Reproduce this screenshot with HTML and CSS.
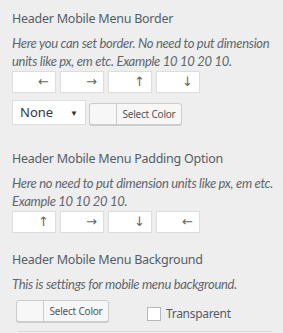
FILE: index.html
```html
<!DOCTYPE html>
<html lang="en">
<head>
    <meta charset="UTF-8">
    <meta name="viewport" content="width=device-width, initial-scale=1.0">
    <title>Header Mobile Menu</title>
    <link rel="stylesheet" href="styles.css">
</head>
<body>
    <div class="control">
        <h3 class="control-title">Header Mobile Menu Border</h3>
        <p class="control-desc">Here you can set border. No need to put dimension units like px, em etc. Example 10 10 20 10.</p>
        <div class="dimensions">
            <div class="dim">&larr;</div>
            <div class="dim">&rarr;</div>
            <div class="dim">&uarr;</div>
            <div class="dim">&darr;</div>
        </div>
        <div class="border-row">
            <div class="select">None<span class="caret">&#9660;</span></div>
            <div class="color-btn">
                <span class="swatch"></span>
                <span class="color-label">Select Color</span>
            </div>
        </div>
    </div>

    <div class="control padding-control">
        <h3 class="control-title">Header Mobile Menu Padding Option</h3>
        <p class="control-desc">Here no need to put dimension units like px, em etc. Example 10 10 20 10.</p>
        <div class="dimensions">
            <div class="dim">&uarr;</div>
            <div class="dim">&rarr;</div>
            <div class="dim">&darr;</div>
            <div class="dim">&larr;</div>
        </div>
    </div>

    <div class="control bg-control">
        <h3 class="control-title">Header Mobile Menu Background</h3>
        <p class="control-desc">This is settings for mobile menu background.</p>
        <div class="bg-row">
            <div class="color-btn">
                <span class="swatch"></span>
                <span class="color-label">Select Color</span>
            </div>
            <label class="check"><span class="box"></span>Transparent</label>
        </div>
        <div class="divider"></div>
    </div>
</body>
</html>
```

FILE: styles.css
```css
body {
    margin: 0;
    padding: 9px 0 0 12px;
    background-color: #eeeeee;
    font-family: "Noto Sans", Arial, sans-serif;
    color: #555d66;
}
.control-title {
    margin: 0;
    font-size: 12.5px;
    letter-spacing: -0.25px;
    font-weight: normal;
    line-height: 20px;
    color: #555d66;
}
.control-desc {
    margin: 5px 0 1px;
    width: 266px;
    font-family: Lato, sans-serif;
    font-style: italic;
    font-size: 13px;
    letter-spacing: -0.3px;
    line-height: 18px;
    color: #5f666d;
}
.dimensions {
    display: flex;
    gap: 4px;
}
.dim {
    width: 36px;
    height: 20px;
    background-color: #fff;
    border: 1px solid #dddddd;
    text-align: right;
    padding-right: 6px;
    font-family: "DejaVu Sans", sans-serif;
    font-size: 13px;
    line-height: 20px;
    color: #666;
}
.border-row {
    display: flex;
    align-items: flex-end;
    gap: 3px;
    margin-top: 7px;
}
.select {
    width: 74px;
    height: 25px;
    background-color: #fff;
    border: 1px solid #dddddd;
    box-sizing: border-box;
    padding-left: 7px;
    font-size: 13px;
    line-height: 23px;
    color: #32373c;
    position: relative;
}
.caret {
    position: absolute;
    right: 7px;
    top: 0;
    font-size: 8px;
    color: #333;
}
.color-btn {
    display: flex;
    width: 93px;
    height: 22px;
    border: 1px solid #cccccc;
    border-radius: 3px;
    background-color: #f7f7f7;
    box-shadow: 0 1px 0 #cccccc;
    box-sizing: border-box;
    overflow: hidden;
}
.swatch {
    width: 26px;
    border-right: 1px solid #cccccc;
}
.color-label {
    flex: 1;
    text-align: center;
    font-size: 10px;
    letter-spacing: -0.2px;
    line-height: 20px;
    color: #555;
}
.padding-control {
    margin-top: 24px;
}
.bg-control {
    margin-top: 17px;
}
.bg-row {
    display: flex;
    align-items: center;
    margin: 7px 0 0 4px;
}
.check {
    display: flex;
    align-items: center;
    margin-left: 38px;
    font-size: 12px;
    letter-spacing: -0.3px;
    color: #555d66;
    padding-top: 5px;
}
.box {
    width: 12px;
    height: 12px;
    background-color: #fff;
    border: 1px solid #b4b9be;
    margin-right: 5px;
}
.divider {
    margin: 9px 0 0 5px;
    width: 255px;
    border-top: 1px solid #dddddd;
}
```
